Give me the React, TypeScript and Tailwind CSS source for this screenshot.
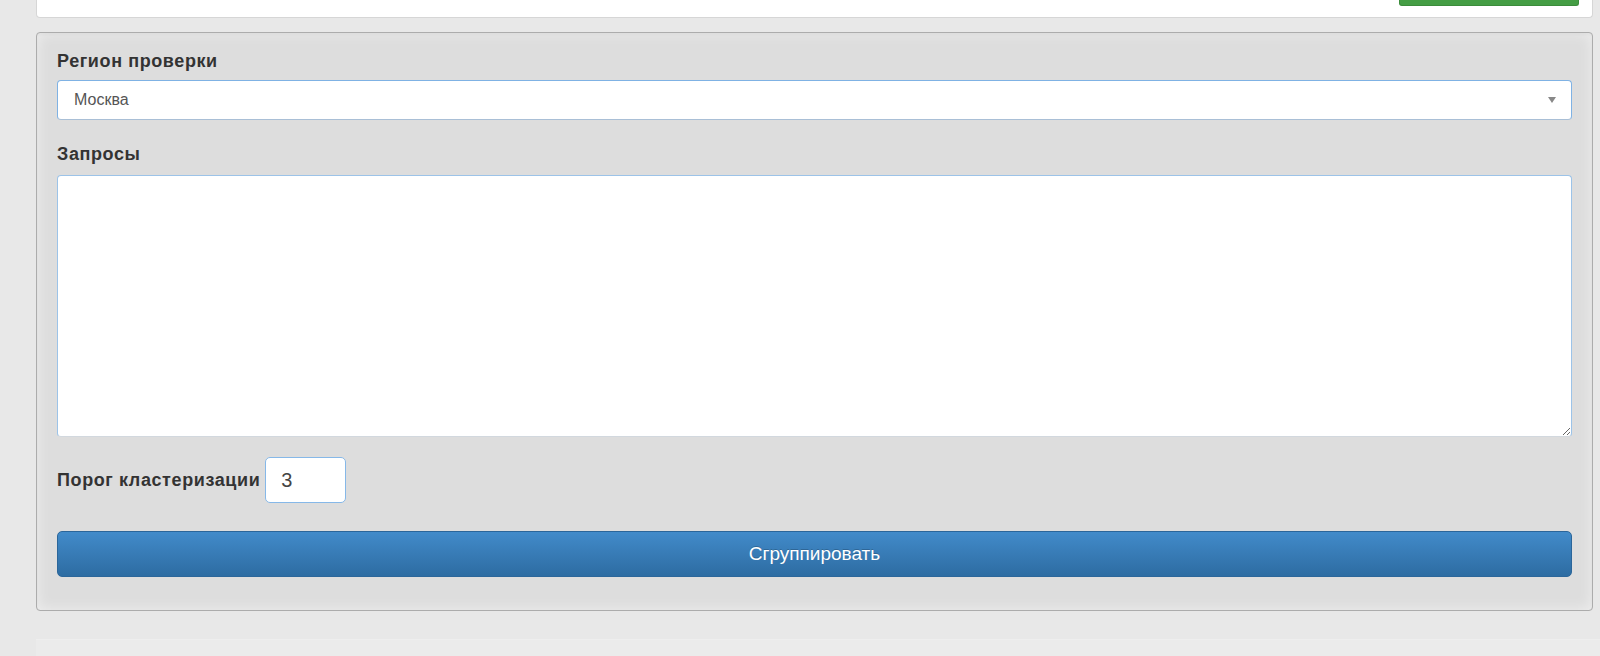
export default function App() {
  return (
    <div className="h-[656px] overflow-hidden bg-[#e8e8e8] font-['Liberation_Sans',Arial,sans-serif] text-[#333]">
      <div className="ml-[36px] w-[1557px]">
        {/* top card, mostly scrolled out of view */}
        <div className="flex h-[18px] justify-end rounded-b-[4px] border border-t-0 border-[#d6d6d6] bg-white pr-[13px]">
          <div className="h-[6px] w-[180px] rounded-b-[3px] border border-t-0 border-[#3b8c3b] bg-[#449d44]" />
        </div>

        <div className="mt-[14px] rounded-[4px] border border-[#acacac] bg-[#dddddd] px-[20px] pt-[17px] pb-[33px] shadow-[inset_0_0_14px_rgba(255,255,255,0.55),inset_0_2px_3px_rgba(0,0,0,0.05)]">
          <label className="block text-[18px] font-bold leading-[22px] tracking-[0.6px]">
            Регион проверки
          </label>
          <div className="mt-[8px] flex h-[40px] items-center justify-between rounded-[4px] border border-[#7fb2e4] border-b-[#a9bfd6] bg-white pl-[16px] pr-[15px]">
            <span className="text-[16px] text-[#555]">Москва</span>
            <span className="h-0 w-0 border-x-[4px] border-t-[6px] border-x-transparent border-t-[#888]" />
          </div>

          <label className="mt-[23px] block text-[18px] font-bold leading-[22px] tracking-[0.6px]">
            Запросы
          </label>
          <textarea className="mt-[10px] block h-[262px] w-full rounded-[4px] border border-[#9cc3e8] border-b-[#d2d8de] bg-white px-[12px] py-[8px] text-[15.4px] outline-none" />

          <div className="mt-[20px] flex items-center gap-[5px]">
            <label className="text-[18px] font-bold leading-[22px] tracking-[0.6px]">
              Порог кластеризации
            </label>
            <input
              defaultValue="3"
              className="h-[46px] w-[81px] rounded-[5px] border border-[#86b8e8] bg-white pl-[15px] text-[20px] text-[#444] outline-none"
            />
          </div>

          <button className="mt-[28px] flex h-[46px] w-full items-center justify-center rounded-[5px] border border-[#2b669a] bg-gradient-to-b from-[#428bca] to-[#2d6ca2] text-[19px] text-white [text-shadow:0_-1px_0_rgba(0,0,0,0.2)]">
            Сгруппировать
          </button>
        </div>
      </div>
      <div className="ml-[36px] mt-[28px] h-[40px] border-t border-[#eeeeee] bg-[#ebebeb]" />
    </div>
  );
}
